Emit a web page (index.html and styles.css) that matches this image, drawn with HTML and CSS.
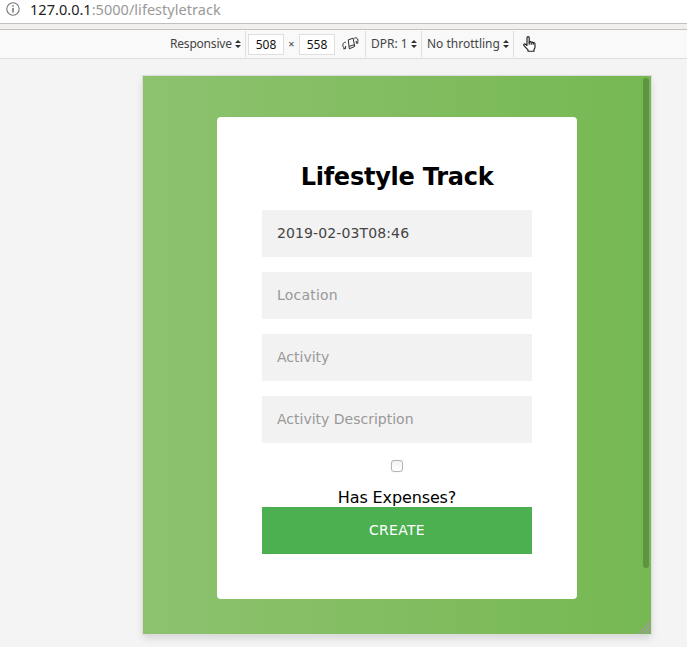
FILE: index.html
```html
<!DOCTYPE html>
<html lang="en">
<head>
<meta charset="utf-8">
<title>Lifestyle Track</title>
<link rel="stylesheet" href="styles.css">
</head>
<body>
<header class="address">
  <svg class="info" width="14" height="14" viewBox="0 0 14 14" fill="none" stroke="#757575"><circle cx="7" cy="7" r="6.2" stroke-width="1.1"/><path d="M7 6v4.5M7 3.3v1.5" stroke-width="1.6"/></svg>
  <span class="url"><span class="host">127.0.0.1</span><span class="path">:5000/lifestyletrack</span></span>
</header>
<div class="strip"></div>
<nav class="toolbar">
  <div class="group device"><span class="label responsive">Responsive</span><svg class="arrows" width="6" height="8" viewBox="0 0 6 8"><path d="M0 3L3 0l3 3zM0 5l3 3 3-3z" fill="#303030"/></svg></div>
  <div class="group size">
    <span class="dim">508</span><span class="times">×</span><span class="dim">558</span>
    <svg class="rotate" width="17" height="14" viewBox="0 0 17 14" fill="none" stroke="#303030" stroke-width="1"><path d="M6.3 2.8l4.8-1.6 1.6 8.3-5.4 2.3zM7.3 9.3l5-1.5M3.8 5.2C1.5 5.2.5 7 .9 9c.2 1.3 1 2.1 2.4 2.4M3.7 9l-.2 2.7-2.3.1M12.2 1.2c2.2-.8 3.6.2 3.8 1.9.1 1.2-.3 2.1-1.2 2.9M14.2 3.9l.2 2.4 2-.4"/></svg>
  </div>
  <div class="group dpr"><span class="label ratio">DPR: 1</span><svg class="arrows" width="6" height="8" viewBox="0 0 6 8"><path d="M0 3L3 0l3 3zM0 5l3 3 3-3z" fill="#303030"/></svg></div>
  <div class="group network"><span class="label throttle">No throttling</span><svg class="arrows" width="6" height="8" viewBox="0 0 6 8"><path d="M0 3L3 0l3 3zM0 5l3 3 3-3z" fill="#303030"/></svg></div>
  <svg class="touch" width="13" height="16" viewBox="0 0 13 16" fill="#fff" stroke="#202020" stroke-width="1.15" stroke-linejoin="round"><path d="M4 9.5V1.8C4 .3 6.2.3 6.2 1.8v4.5c.2-1 2-.9 2 .3.3-.8 1.9-.6 2 .4.5-.6 1.8-.2 1.8.9v3.3c0 1-.9 1.7-1 2.6v1.4H5v-1.3L1 9.7C.2 8.5 1.4 7.4 2.5 8.3z"/><path d="M6.2 6v2.8M8.2 6.7v2.1M10.2 7.1v1.7" fill="none"/></svg>
</nav>
<main class="stage">
  <section class="viewport">
    <form class="card">
      <h2>Lifestyle Track</h2>
      <input class="field date" type="text" value="2019-02-03T08:46">
      <input class="field location" type="text" placeholder="Location">
      <input class="field" type="text" placeholder="Activity">
      <input class="field" type="text" placeholder="Activity Description">
      <input class="check" id="expenses" type="checkbox">
      <label class="expenses" for="expenses">Has Expenses?</label>
      <button type="button">CREATE</button>
    </form>
    <div class="scrollbar"></div>
    <svg class="grip" width="13" height="13" viewBox="0 0 13 13" stroke="#a09ba0" stroke-width="1.3"><path d="M1 12.5L12.5 1M5 12.5l7.5-7.5M9 12.5l3.5-3.5"/></svg>
  </section>
</main>
</body>
</html>
```
FILE: styles.css
```css
* { box-sizing: border-box; }
body {
  margin: 0;
  height: 647px;
  overflow: hidden;
  background: #f4f4f4;
  font-family: "DejaVu Sans", sans-serif;
}
.address {
  height: 24px;
  padding: 0 0 5px 6px;
  display: flex;
  align-items: center;
  gap: 10px;
  background: #fff;
  border-bottom: 1px solid #c2bfbc;
}
.info { flex: none; }
.url { font: 14.5px/18px "Noto Sans", sans-serif; letter-spacing: .03px; white-space: nowrap; }
.host { color: #222; }
.path { color: #999; }
.strip { height: 6px; background: #f1f0ee; border-bottom: 1px solid #c4c2c0; }
.toolbar {
  height: 29px;
  display: flex;
  align-items: center;
  padding-left: 170px;
  background: #f9f9f9;
  border-bottom: 1px solid #dedede;
  font: 12px/16px "Noto Sans", sans-serif;
  color: #444;
  white-space: nowrap;
}
.group { height: 26px; display: flex; align-items: center; border-right: 1px solid #dedede; }
.label { display: block; flex: none; }
.responsive { letter-spacing: -.2px; }
.arrows { flex: none; margin-left: auto; }
.device { width: 76px; padding-right: 4px; }
.size { width: 120px; padding-left: 2px; }
.dpr { width: 56px; padding: 0 4px 0 5px; }
.network { width: 92px; padding: 0 4px 0 5px; }
.dim {
  width: 36px;
  height: 21px;
  border: 1px solid #dedede;
  background: #fff;
  color: #111;
  line-height: 19px;
  text-align: center;
}
.times { width: 15px; text-align: center; font-size: 11px; }
.rotate { margin-left: 7px; }
.touch { margin-left: 9px; }
.stage { padding: 17px 0 0 143px; }
.viewport {
  position: relative;
  width: 508px;
  height: 558px;
  padding: 41px 74px 0;
  background: linear-gradient(to left, #76b852, #8dc26f);
  box-shadow: 0 0 0 1px #dcdcdc, 0 4px 8px rgba(0, 0, 0, .13);
}
.card {
  width: 360px;
  height: 482px;
  padding: 46px 45px 45px;
  background: #fff;
  border-radius: 4px;
  display: flex;
  flex-direction: column;
  align-items: center;
}
h2 { margin: 0 0 19px; font-size: 24px; line-height: 28px; letter-spacing: -.25px; }
.field {
  display: block;
  width: 270px;
  height: 47px;
  margin: 0 0 15px;
  padding: 14px 15px 16px;
  border: 0;
  outline: 0;
  border-radius: 0;
  background: #f2f2f2;
  color: #444;
  font: 14px/17px "DejaVu Sans", sans-serif;
}
.date { letter-spacing: .12px; }
.location { letter-spacing: .2px; }
.field::placeholder { color: #999; opacity: 1; }
.check {
  appearance: none;
  width: 12px;
  height: 12px;
  margin: 2px 0 16px;
  border: 1px solid #b4b4b4;
  border-radius: 3px;
  background: linear-gradient(#f3f3f3, #fff);
  box-shadow: 0 0 1px #ccc;
}
.expenses { font-size: 16px; line-height: 19px; letter-spacing: -.12px; }
button {
  width: 270px;
  height: 47px;
  margin: 0;
  padding: 0;
  border: 0;
  background: #4caf50;
  color: #fff;
  font: 14px/17px "DejaVu Sans", sans-serif;
  letter-spacing: .3px;
}
.scrollbar {
  position: absolute;
  top: 2px;
  right: 2px;
  width: 6px;
  height: 490px;
  border-radius: 3px;
  background: #5e9341;
}
.grip { position: absolute; right: 0; bottom: 0; }
```
